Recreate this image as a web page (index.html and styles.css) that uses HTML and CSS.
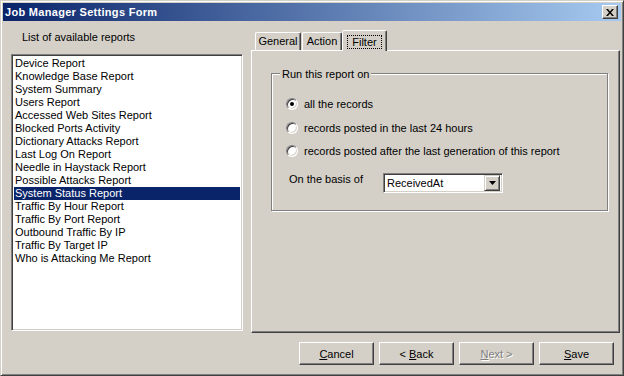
FILE: index.html
```html
<!DOCTYPE html>
<html lang="en">
<head>
    <meta charset="UTF-8">
    <title>Job Manager Settings Form</title>
    <link rel="stylesheet" href="styles.css">
</head>
<body>

<div class="window">
    <div class="titlebar">
        <span class="title">Job Manager Settings Form</span>
        <span class="close">
            <svg width="8" height="7" viewBox="0 0 8 7">
                <path d="M0 0h2l2 2.5L6 0h2L5 3.5 8 7H6L4 4.5 2 7H0l3-3.5z" fill="#000"/>
            </svg>
        </span>
    </div>

    <div class="body">
        <!-- report list -->
        <div class="left">
            <div class="list-label">List of available reports</div>
            <ul class="listbox">
                <li>Device Report</li>
                <li>Knowledge Base Report</li>
                <li>System Summary</li>
                <li>Users Report</li>
                <li>Accessed Web Sites Report</li>
                <li>Blocked Ports Activity</li>
                <li>Dictionary Attacks Report</li>
                <li>Last Log On Report</li>
                <li>Needle in Haystack Report</li>
                <li>Possible Attacks Report</li>
                <li class="selected">System Status Report</li>
                <li>Traffic By Hour Report</li>
                <li>Traffic By Port Report</li>
                <li>Outbound Traffic By IP</li>
                <li>Traffic By Target IP</li>
                <li>Who is Attacking Me Report</li>
            </ul>
        </div>

        <!-- settings tabs -->
        <div class="right">
            <div class="tabs">
                <div class="tab tab-general">General</div>
                <div class="tab tab-action">Action</div>
                <div class="tab tab-filter active"><span class="focus">Filter</span></div>
            </div>
            <div class="panel">
                <div class="group">
                    <span class="group-title">Run this report on</span>
                    <div class="radios">
                        <div class="radio-row"><span class="radio checked"></span>all the records</div>
                        <div class="radio-row"><span class="radio"></span>records posted in the last 24 hours</div>
                        <div class="radio-row"><span class="radio"></span>records posted after the last generation of this report</div>
                    </div>
                    <div class="basis-row">
                        <span class="basis-label">On the basis of</span>
                        <div class="combo">
                            <span class="combo-text">ReceivedAt</span>
                            <span class="combo-btn">
                                <svg width="7" height="4" viewBox="0 0 7 4"><path d="M0 0h7L3.5 4z" fill="#000"/></svg>
                            </span>
                        </div>
                    </div>
                </div>
            </div>
            <div class="buttons">
                <button class="btn"><u>C</u>ancel</button>
                <button class="btn">&lt; <u>B</u>ack</button>
                <button class="btn disabled"><u>N</u>ext &gt;</button>
                <button class="btn"><u>S</u>ave</button>
            </div>
        </div>
    </div>
</div>

</body>
</html>
```

FILE: styles.css
```css
body {
    margin: 0;
    padding: 0;
    font-family: "Liberation Sans", Arial, sans-serif;
    font-size: 11px;
    color: #000;
    background: #d4d0c8;
}
.window {
    width: 624px;
    height: 376px;
    box-sizing: border-box;
    border: 1px solid;
    border-color: #d4d0c8 #404040 #404040 #d4d0c8;
    box-shadow: inset 1px 1px 0 #fff, inset -1px -1px 0 #808080;
    padding: 2px;
    background: #d4d0c8;
    display: flex;
    flex-direction: column;
}
.titlebar {
    height: 18px;
    display: flex;
    align-items: center;
    justify-content: space-between;
    background: linear-gradient(to right, #0a246a, #a6caf0);
    padding: 0 3px 0 2px;
}
.title {
    color: #fff;
    font-weight: bold;
    font-size: 11px;
    letter-spacing: 0.3px;
}
.close {
    width: 16px;
    height: 14px;
    box-sizing: border-box;
    background: #d4d0c8;
    border: 1px solid;
    border-color: #fff #404040 #404040 #fff;
    box-shadow: inset -1px -1px 0 #808080;
    display: flex;
    align-items: center;
    justify-content: center;
}
.body {
    flex: 1;
    display: flex;
    gap: 8px;
    padding: 0 1px 0 8px;
}
.left {
    width: 232px;
    display: flex;
    flex-direction: column;
}
.list-label {
    line-height: 13px;
    margin-top: 10px;
    padding-left: 11px;
}
.listbox {
    list-style: none;
    margin: 10px 0 0 0;
    height: 277px;
    box-sizing: border-box;
    background: #fff;
    border: 1px solid;
    border-color: #808080 #fff #fff #808080;
    box-shadow: inset 1px 1px 0 #404040, inset -1px -1px 0 #d4d0c8;
    padding: 2px 2px;
}
.listbox li {
    line-height: 13px;
    height: 13px;
    padding-left: 1px;
    white-space: nowrap;
}
.listbox li.selected {
    background: #0a246a;
    color: #fff;
}
.right {
    width: 369px;
    display: flex;
    flex-direction: column;
}
.tabs {
    height: 20px;
    margin-top: 9px;
    display: flex;
    align-items: flex-end;
    padding-left: 4px;
    position: relative;
    z-index: 1;
}
.tab {
    height: 18px;
    box-sizing: border-box;
    border: 1px solid;
    border-bottom: none;
    border-color: #fff #404040 transparent #fff;
    box-shadow: inset -1px 0 0 #808080;
    border-radius: 2px 2px 0 0;
    line-height: 16px;
    text-align: center;
}
.tab-general {
    width: 46px;
}
.tab-action {
    width: 40px;
    margin-left: 1px;
}
.tab-filter {
    width: 45px;
}
.tab.active {
    height: 21px;
    margin-bottom: -1px;
    background: #d4d0c8;
    padding-top: 3px;
}
.focus {
    display: inline-block;
    line-height: 12px;
    padding: 0 4px;
    outline: 1px dotted #000;
}
.panel {
    height: 283px;
    box-sizing: border-box;
    border: 1px solid;
    border-color: #fff #404040 #404040 #fff;
    box-shadow: inset -1px -1px 0 #808080;
    padding: 22px 0 0 19px;
}
.group {
    position: relative;
    width: 337px;
    height: 138px;
    box-sizing: border-box;
    border: 1px solid #808080;
    box-shadow: inset 1px 1px 0 #fff, 1px 1px 0 #fff;
    padding: 22px 0 0 14px;
}
.group-title {
    position: absolute;
    top: -6px;
    left: 8px;
    padding: 0 2px;
    line-height: 13px;
    background: #d4d0c8;
}
.radios {
    display: flex;
    flex-direction: column;
    gap: 7.5px;
}
.radio-row {
    height: 16px;
    display: flex;
    align-items: center;
    gap: 6px;
    white-space: nowrap;
}
.radio {
    width: 12px;
    height: 12px;
    box-sizing: border-box;
    border-radius: 50%;
    border: 1px solid;
    border-color: #808080 #fff #fff #808080;
    box-shadow: inset 1px 1px 0 #404040, inset -1px -1px 0 #d4d0c8;
    background: #fff;
    display: flex;
    align-items: center;
    justify-content: center;
}
.radio.checked::after {
    content: "";
    width: 4px;
    height: 4px;
    border-radius: 50%;
    background: #000;
}
.basis-row {
    display: flex;
    align-items: flex-start;
    margin-top: 14px;
}
.basis-label {
    width: 94px;
    margin-left: 3px;
    line-height: 13px;
}
.combo {
    width: 120px;
    height: 20px;
    box-sizing: border-box;
    background: #fff;
    border: 1px solid;
    border-color: #808080 #fff #fff #808080;
    box-shadow: inset 1px 1px 0 #404040, inset -1px -1px 0 #d4d0c8;
    padding: 2px;
    display: flex;
    align-items: center;
    justify-content: space-between;
}
.combo-text {
    padding-left: 1px;
}
.combo-btn {
    width: 16px;
    height: 16px;
    box-sizing: border-box;
    background: #d4d0c8;
    border: 1px solid;
    border-color: #d4d0c8 #404040 #404040 #d4d0c8;
    box-shadow: inset 1px 1px 0 #fff, inset -1px -1px 0 #808080;
    display: flex;
    align-items: center;
    justify-content: center;
}
.buttons {
    display: flex;
    justify-content: flex-end;
    gap: 5px;
    margin-top: 9px;
    padding-right: 6px;
}
.btn {
    width: 75px;
    height: 23px;
    box-sizing: border-box;
    font-family: "Liberation Sans", Arial, sans-serif;
    font-size: 11px;
    color: #000;
    background: #d4d0c8;
    border: 1px solid;
    border-color: #fff #404040 #404040 #fff;
    box-shadow: inset -1px -1px 0 #808080;
    padding: 0;
}
.btn.disabled {
    color: #808080;
    text-shadow: 1px 1px 0 #fff;
}
```
